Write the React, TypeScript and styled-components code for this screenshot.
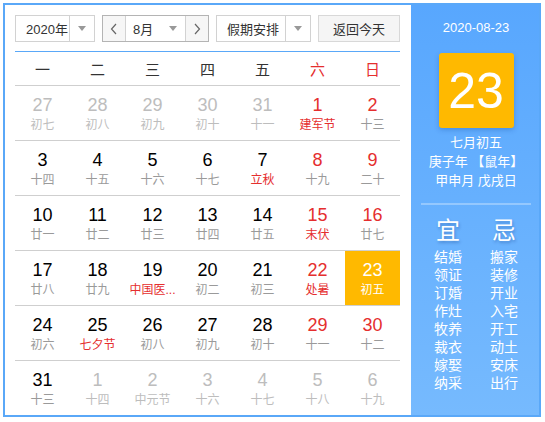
import React from 'react';
import styled, { createGlobalStyle, css } from 'styled-components';

const GlobalStyle = createGlobalStyle`
  html, body {
    margin: 0;
    padding: 0;
    background: #fff;
  }
  body {
    font-family: "Liberation Sans", "Noto Sans CJK SC", sans-serif;
    color: #333;
  }
  #root {
    padding: 3px;
  }
`;

const RED = '#e52e2e';

const CalendarBox = styled.div`
  box-sizing: border-box;
  width: 538px;
  height: 414px;
  border: 2px solid #5aa8f8;
  display: flex;
  overflow: hidden;
`;

const MainPanel = styled.div`
  width: 406px;
  flex-shrink: 0;
  box-sizing: border-box;
  padding: 10px 11px 0 10px;
  display: flex;
  flex-direction: column;
`;

const Toolbar = styled.div`
  display: flex;
  gap: 7px;
  height: 27px;
  font-size: 13px;
  padding-bottom: 9px;
  border-bottom: 1px solid #5aa8f8;
`;

const SelectBox = styled.div<{ width: number }>`
  box-sizing: border-box;
  width: ${(p) => p.width}px;
  height: 27px;
  border: 1px solid #d2d2d2;
  display: flex;
  align-items: stretch;
  background: #fff;
`;

const SelectText = styled.div`
  flex: 1;
  display: flex;
  align-items: center;
  padding-left: 10px;
  color: #333;
`;

const ArrowPart = styled.div<{ divider?: boolean }>`
  width: 24px;
  display: flex;
  align-items: center;
  justify-content: center;
  ${(p) =>
    p.divider &&
    css`
      border-left: 1px solid #d2d2d2;
    `}
`;

const Caret = styled.span`
  width: 0;
  height: 0;
  border-left: 4px solid transparent;
  border-right: 4px solid transparent;
  border-top: 5px solid #999;
`;

const MonthGroup = styled.div`
  box-sizing: border-box;
  width: 107px;
  height: 27px;
  border: 1px solid #b4b4b4;
  display: flex;
`;

const StepButton = styled.div<{ side: 'left' | 'right' }>`
  width: 22px;
  background: #f6f6f6;
  display: flex;
  align-items: center;
  justify-content: center;
  ${(p) =>
    p.side === 'left'
      ? css`
          border-right: 1px solid #d2d2d2;
        `
      : css`
          border-left: 1px solid #d2d2d2;
        `}
`;

const MonthSelect = styled.div`
  flex: 1;
  display: flex;
  align-items: center;
  padding-left: 7px;
  background: #fff;
`;

const MonthCaret = styled(Caret)`
  margin-left: auto;
  margin-right: 8px;
`;

const ReturnButton = styled.div`
  box-sizing: border-box;
  width: 82px;
  height: 27px;
  border: 1px solid #d8d8d8;
  background: #f5f5f5;
  display: flex;
  align-items: center;
  justify-content: center;
  color: #333;
`;

const WeekHeader = styled.div`
  display: grid;
  grid-template-columns: repeat(7, 55px);
  height: 33px;
  border-bottom: 1px solid #cfcfcf;
`;

const WeekName = styled.div<{ weekend?: boolean }>`
  display: flex;
  align-items: center;
  justify-content: center;
  font-size: 15px;
  color: ${(p) => (p.weekend ? RED : '#333')};
`;

const DayRow = styled.div<{ last?: boolean }>`
  display: grid;
  grid-template-columns: repeat(7, 55px);
  height: 54px;
  border-bottom: ${(p) => (p.last ? 'none' : '1px solid #cfcfcf')};
`;

const DayCell = styled.div<{ selected?: boolean }>`
  display: flex;
  flex-direction: column;
  align-items: center;
  padding-top: 9px;
  box-sizing: border-box;
  background: ${(p) => (p.selected ? '#ffb900' : 'transparent')};
`;

type Tone = 'normal' | 'red' | 'other' | 'white';

const toneColor = (tone: Tone, fallback: string) =>
  tone === 'red' ? RED : tone === 'other' ? '#bdbdbd' : tone === 'white' ? '#fff' : fallback;

const DayNumber = styled.div<{ tone: Tone }>`
  font-size: 18px;
  line-height: 20px;
  color: ${(p) => toneColor(p.tone, '#000')};
`;

const LunarText = styled.div<{ tone: Tone }>`
  margin-top: 2px;
  font-size: 12px;
  line-height: 16px;
  white-space: nowrap;
  color: ${(p) => toneColor(p.tone, '#9a9a9a')};
`;

const SidePanel = styled.div`
  flex: 1;
  background: linear-gradient(#58a7fe, #76bafe);
  color: #fff;
  display: flex;
  flex-direction: column;
  align-items: center;
  padding-left: 2px;
`;

const DateLine = styled.div`
  margin-top: 14px;
  font-size: 13px;
  line-height: 18px;
`;

const BigDay = styled.div`
  margin-top: 16px;
  width: 75px;
  height: 75px;
  border-radius: 3px;
  background: #ffb900;
  box-shadow: 0 2px 5px rgba(0, 60, 140, 0.25);
  display: flex;
  align-items: center;
  justify-content: center;
  font-size: 50px;
  font-family: "Liberation Sans", sans-serif;
`;

const LunarInfo = styled.div`
  margin-top: 5px;
  font-size: 13px;
  line-height: 19px;
  text-align: center;
`;

const Divider = styled.div`
  margin-top: 13px;
  width: 110px;
  height: 2px;
  background: rgba(255, 255, 255, 0.3);
`;

const Advice = styled.div`
  margin-top: 11px;
  display: grid;
  grid-template-columns: 52px 52px;
  column-gap: 4px;
  justify-items: center;
`;

const AdviceTitle = styled.div`
  font-size: 24px;
  line-height: 30px;
  text-shadow: 1px 2px 3px rgba(0, 40, 110, 0.3);
  margin-bottom: 2px;
`;

const AdviceItem = styled.div`
  font-size: 14px;
  line-height: 18px;
`;

const Chevron = ({ dir }: { dir: 'left' | 'right' }) => (
  <svg width="8" height="12" viewBox="0 0 8 12">
    <path
      d={dir === 'left' ? 'M6 1 L1.5 6 L6 11' : 'M2 1 L6.5 6 L2 11'}
      fill="none"
      stroke="#666"
      strokeWidth="1.2"
    />
  </svg>
);

type Day = { n: number; lunar: string; other?: boolean; weekend?: boolean; fest?: boolean; selected?: boolean };

const rows: Day[][] = [
  [
    { n: 27, lunar: '初七', other: true },
    { n: 28, lunar: '初八', other: true },
    { n: 29, lunar: '初九', other: true },
    { n: 30, lunar: '初十', other: true },
    { n: 31, lunar: '十一', other: true },
    { n: 1, lunar: '建军节', weekend: true, fest: true },
    { n: 2, lunar: '十三', weekend: true },
  ],
  [
    { n: 3, lunar: '十四' },
    { n: 4, lunar: '十五' },
    { n: 5, lunar: '十六' },
    { n: 6, lunar: '十七' },
    { n: 7, lunar: '立秋', fest: true },
    { n: 8, lunar: '十九', weekend: true },
    { n: 9, lunar: '二十', weekend: true },
  ],
  [
    { n: 10, lunar: '廿一' },
    { n: 11, lunar: '廿二' },
    { n: 12, lunar: '廿三' },
    { n: 13, lunar: '廿四' },
    { n: 14, lunar: '廿五' },
    { n: 15, lunar: '末伏', weekend: true, fest: true },
    { n: 16, lunar: '廿七', weekend: true },
  ],
  [
    { n: 17, lunar: '廿八' },
    { n: 18, lunar: '廿九' },
    { n: 19, lunar: '中国医...', fest: true },
    { n: 20, lunar: '初二' },
    { n: 21, lunar: '初三' },
    { n: 22, lunar: '处暑', weekend: true, fest: true },
    { n: 23, lunar: '初五', weekend: true, selected: true },
  ],
  [
    { n: 24, lunar: '初六' },
    { n: 25, lunar: '七夕节', fest: true },
    { n: 26, lunar: '初八' },
    { n: 27, lunar: '初九' },
    { n: 28, lunar: '初十' },
    { n: 29, lunar: '十一', weekend: true },
    { n: 30, lunar: '十二', weekend: true },
  ],
  [
    { n: 31, lunar: '十三' },
    { n: 1, lunar: '十四', other: true },
    { n: 2, lunar: '中元节', other: true },
    { n: 3, lunar: '十六', other: true },
    { n: 4, lunar: '十七', other: true },
    { n: 5, lunar: '十八', other: true },
    { n: 6, lunar: '十九', other: true },
  ],
];

const weekNames = ['一', '二', '三', '四', '五', '六', '日'];
const goodThings = ['结婚', '领证', '订婚', '作灶', '牧养', '裁衣', '嫁娶', '纳采'];
const badThings = ['搬家', '装修', '开业', '入宅', '开工', '动土', '安床', '出行'];

const numberTone = (d: Day): Tone =>
  d.selected ? 'white' : d.other ? 'other' : d.weekend ? 'red' : 'normal';
const lunarTone = (d: Day): Tone =>
  d.selected ? 'white' : d.other ? 'other' : d.fest ? 'red' : 'normal';

export default function App() {
  return (
    <>
      <GlobalStyle />
      <CalendarBox>
        <MainPanel>
          <Toolbar>
            <SelectBox width={80}>
              <SelectText>2020年</SelectText>
              <ArrowPart divider>
                <Caret />
              </ArrowPart>
            </SelectBox>
            <MonthGroup>
              <StepButton side="left">
                <Chevron dir="left" />
              </StepButton>
              <MonthSelect>
                8月
                <MonthCaret />
              </MonthSelect>
              <StepButton side="right">
                <Chevron dir="right" />
              </StepButton>
            </MonthGroup>
            <SelectBox width={95}>
              <SelectText>假期安排</SelectText>
              <ArrowPart divider>
                <Caret />
              </ArrowPart>
            </SelectBox>
            <ReturnButton>返回今天</ReturnButton>
          </Toolbar>
          <WeekHeader>
            {weekNames.map((w, i) => (
              <WeekName key={w} weekend={i >= 5}>
                {w}
              </WeekName>
            ))}
          </WeekHeader>
          {rows.map((row, ri) => (
            <DayRow key={ri} last={ri === rows.length - 1}>
              {row.map((d, ci) => (
                <DayCell key={ci} selected={d.selected}>
                  <DayNumber tone={numberTone(d)}>{d.n}</DayNumber>
                  <LunarText tone={lunarTone(d)}>{d.lunar}</LunarText>
                </DayCell>
              ))}
            </DayRow>
          ))}
        </MainPanel>
        <SidePanel>
          <DateLine>2020-08-23</DateLine>
          <BigDay>23</BigDay>
          <LunarInfo>
            七月初五
            <br />
            庚子年 【鼠年】
            <br />
            甲申月 戊戌日
          </LunarInfo>
          <Divider />
          <Advice>
            <AdviceTitle>宜</AdviceTitle>
            <AdviceTitle>忌</AdviceTitle>
            {goodThings.map((g, i) => (
              <React.Fragment key={g}>
                <AdviceItem>{g}</AdviceItem>
                <AdviceItem>{badThings[i]}</AdviceItem>
              </React.Fragment>
            ))}
          </Advice>
        </SidePanel>
      </CalendarBox>
    </>
  );
}
